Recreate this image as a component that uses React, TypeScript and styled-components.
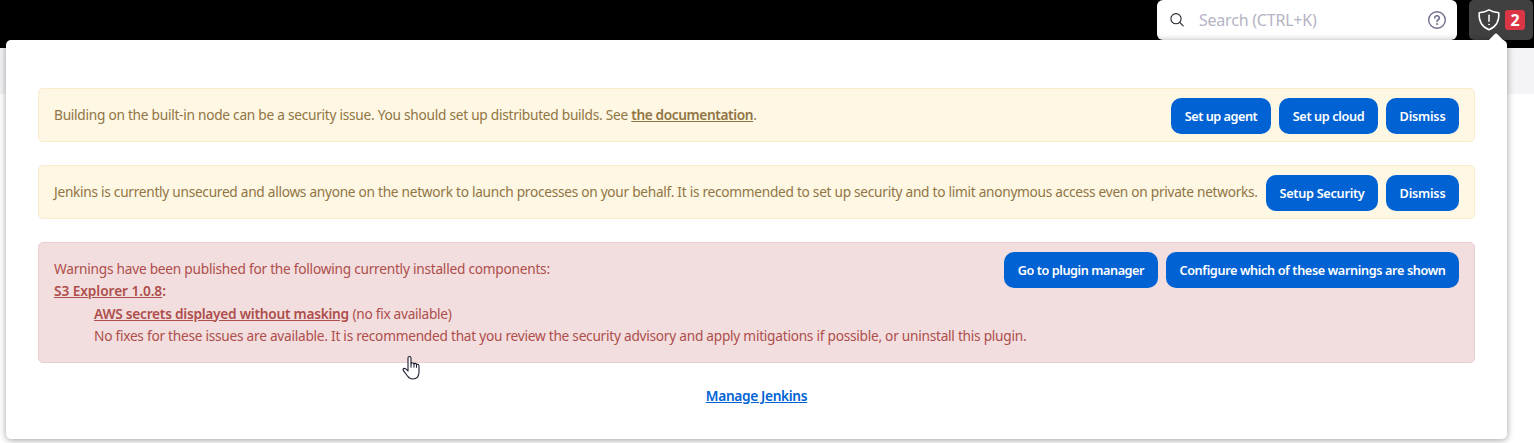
import React from "react";
import styled, { createGlobalStyle } from "styled-components";

const GlobalStyle = createGlobalStyle`
  * { box-sizing: border-box; }
  body {
    margin: 0;
    background: #fff;
    font-family: "Noto Sans", "Open Sans", sans-serif;
    font-size: 13.7px;
    line-height: 22.3px;
    overflow: hidden;
  }
`;

const Page = styled.div`
  position: relative;
  height: 443px;
  overflow: hidden;
`;

const Header = styled.header`
  display: flex;
  justify-content: flex-end;
  gap: 12px;
  height: 48px;
  padding-right: 1px;
  background: #000;
`;

const Breadcrumbs = styled.div`
  height: 46px;
  background: #f4f4f7;
`;

const SearchBox = styled.div`
  display: flex;
  align-items: center;
  width: 300px;
  height: 40px;
  padding: 0 10px 0 12px;
  border-radius: 6px;
  background: #fff;
`;

const Placeholder = styled.span`
  flex: 1;
  margin-left: 14px;
  font-size: 16px;
  letter-spacing: -0.22px;
  color: #b4b4c4;
`;

const MonitorButton = styled.button`
  display: flex;
  align-items: center;
  width: 64px;
  height: 40px;
  padding: 0 8px;
  gap: 4px;
  border: 0;
  border-radius: 5px;
  background: #404040;
  font-family: inherit;
`;

const Count = styled.span`
  width: 20px;
  height: 20px;
  border-radius: 3px;
  background: #dc3545;
  color: #fff;
  font-size: 16px;
  font-weight: 700;
  line-height: 20px;
  text-align: center;
`;

const Panel = styled.section`
  position: absolute;
  top: 40px;
  left: 6px;
  width: 1501px;
  height: 399px;
  padding: 48px 32px 0;
  border-radius: 5px;
  background: #fff;
  box-shadow: 0 1px 7px rgba(0, 0, 0, 0.38);
`;

const Caret = styled.svg`
  position: absolute;
  top: -7px;
  right: 3px;
`;

const Alert = styled.div<{ $danger?: boolean }>`
  margin-bottom: 22.7px;
  padding: 15px;
  border: 1px solid ${(p) => (p.$danger ? "#ebccd1" : "#faebcc")};
  border-radius: 5px;
  background: ${(p) => (p.$danger ? "#f2dede" : "#fdf7e3")};
  color: ${(p) => (p.$danger ? "#ae4e4c" : "#917545")};
  white-space: nowrap;
`;

const Actions = styled.div`
  float: right;
  display: flex;
  gap: 8px;
  height: 22px;
  margin-top: -6px;
`;

const ActionButton = styled.button<{ $width: number; $spacing?: number }>`
  width: ${(p) => p.$width}px;
  height: 36px;
  padding: 0;
  border: 0;
  border-radius: 10px;
  background: #0062d3;
  color: #fff;
  font: 600 12.7px/36px "Noto Sans", sans-serif;
  letter-spacing: ${(p) => p.$spacing ?? 0}px;
  white-space: nowrap;
`;

const Message = styled.span<{ $spacing?: number }>`
  letter-spacing: ${(p) => p.$spacing ?? 0}px;
`;

const AlertLink = styled.a<{ $spacing?: number }>`
  font-weight: 600;
  text-decoration: underline;
  letter-spacing: ${(p) => p.$spacing ?? 0}px;
`;

const Details = styled.dl`
  margin: 0;
`;

const Term = styled.dt`
  font-weight: 600;
`;

const Description = styled.dd`
  margin: 0 0 0 40px;
`;

const Footer = styled.div`
  margin-top: -23.5px;
  padding-top: 22.7px;
  text-align: center;
`;

const ManageLink = styled.a<{ $spacing?: number }>`
  color: #0062d3;
  font-weight: 600;
  text-decoration: underline;
  letter-spacing: ${(p) => p.$spacing ?? 0}px;
`;

const Pointer = styled.svg`
  position: absolute;
  left: 402px;
  top: 355px;
`;

export default function App() {
  return (
    <Page>
      <GlobalStyle />
      <Header>
        <SearchBox>
          <svg width="16" height="16" viewBox="0 0 16 16" fill="none" stroke="#25252f" strokeWidth="1.1" strokeLinecap="round">
            <circle cx="7" cy="6.7" r="5.1" />
            <path d="M10.7 10.4 14.2 13.8" />
          </svg>
          <Placeholder>Search (CTRL+K)</Placeholder>
          <svg width="20" height="20" viewBox="0 0 20 20" fill="none" stroke="#6f6f8e" strokeWidth="1.4" strokeLinecap="round" strokeLinejoin="round">
            <circle cx="10" cy="10" r="8.3" />
            <path d="M7.7 8a2.3 2.2 0 1 1 3.5 1.8c-.8.5-1.2.8-1.2 1.6" strokeWidth="1.6" />
            <circle cx="10" cy="14" r=".55" fill="#6f6f8e" strokeWidth=".8" />
          </svg>
        </SearchBox>
        <MonitorButton>
          <svg width="24" height="24" viewBox="0 0 24 24" fill="none" stroke="#fff" strokeWidth="1.5" strokeLinecap="round" strokeLinejoin="round">
            <path d="M12 1.8C9 3.7 5.5 4.4 2.2 4.7 1.6 12.5 4.5 18.6 12 21.8 19.5 18.6 22.4 12.5 21.8 4.7 18.5 4.4 15 3.7 12 1.8Z" />
            <path d="M12 7.3v6" />
            <circle cx="12" cy="16.5" r=".5" fill="#fff" strokeWidth=".7" />
          </svg>
          <Count>2</Count>
        </MonitorButton>
      </Header>
      <Breadcrumbs />
      <Panel>
        <Caret width="16" height="8" viewBox="0 0 16 8">
          <path d="M0 8 7 .8Q8 0 9 .8L16 8Z" fill="#fff" />
        </Caret>
        <Alert>
          <Actions>
            <ActionButton $width={100} $spacing={-0.48}>Set up agent</ActionButton>
            <ActionButton $width={99} $spacing={-0.38}>Set up cloud</ActionButton>
            <ActionButton $width={73} $spacing={-0.22}>Dismiss</ActionButton>
          </Actions>
          <Message $spacing={-0.265}>
            Building on the built-in node can be a security issue. You should set up distributed builds. See{" "}
          </Message>
          <AlertLink $spacing={-0.39}>the documentation</AlertLink>.
        </Alert>
        <Alert>
          <Actions>
            <ActionButton $width={112} $spacing={-0.28}>Setup Security</ActionButton>
            <ActionButton $width={73} $spacing={-0.22}>Dismiss</ActionButton>
          </Actions>
          <Message $spacing={-0.282}>
            Jenkins is currently unsecured and allows anyone on the network to launch processes on your behalf. It is
            recommended to set up security and to limit anonymous access even on private networks.
          </Message>
        </Alert>
        <Alert $danger>
          <Actions>
            <ActionButton $width={154} $spacing={-0.44}>Go to plugin manager</ActionButton>
            <ActionButton $width={293} $spacing={-0.38}>Configure which of these warnings are shown</ActionButton>
          </Actions>
          <Message $spacing={-0.247}>
            Warnings have been published for the following currently installed components:
          </Message>
          <Details>
            <Term>
              <AlertLink $spacing={-0.07}>S3 Explorer 1.0.8</AlertLink>:
            </Term>
            <Description>
              <AlertLink $spacing={-0.25}>AWS secrets displayed without masking</AlertLink>{" "}
              <Message $spacing={-0.29}>(no fix available)</Message>
            </Description>
            <Description>
              <Message $spacing={-0.26}>
                No fixes for these issues are available. It is recommended that you review the security advisory and
                apply mitigations if possible, or uninstall this plugin.
              </Message>
            </Description>
          </Details>
        </Alert>
        <Footer>
          <ManageLink $spacing={-0.33}>Manage Jenkins</ManageLink>
        </Footer>
      </Panel>
      <Pointer width="18" height="25" viewBox="0 0 18 25">
        <path
          d="M6 15V3Q6 1.5 7.5 1.5T9 3V9Q9 7.7 10.3 7.7T12 9.2Q12 8.2 13.2 8.4T14.5 9.8Q14.7 9 15.8 9.3T17 11V17.5Q16.5 24 11 24 7.5 24 5.5 21L1.2 15.3Q.7 13.7 2.2 13.4 3.5 13.2 6 16Z"
          fill="#fff"
          stroke="#1c1c30"
          strokeWidth="1.1"
          strokeLinejoin="round"
        />
        <path d="M9 8.5v4.2M12 9.2v3.5M14.5 9.8v3" stroke="#1c1c30" strokeWidth="1" />
      </Pointer>
    </Page>
  );
}
